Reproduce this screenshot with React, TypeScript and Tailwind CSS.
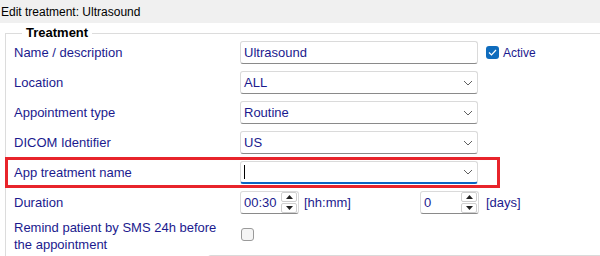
import React from "react";

const NAVY = "text-[#1b1a8e]";

function Chevron() {
  return (
    <svg width="10" height="6" viewBox="0 0 10 6" className="shrink-0">
      <path d="M1 1 L5 5 L9 1" fill="none" stroke="#606060" strokeWidth="1" />
    </svg>
  );
}

function Input({ value, select, focused }: { value?: string; select?: boolean; focused?: boolean }) {
  return (
    <div
      className={`w-[238px] h-[23px] bg-white rounded-[3px] border border-[#dadada] flex items-center pl-[3px] pr-[4px] ${
        focused ? "border-b-2 border-b-[#0a64c2]" : "border-b-[#8a8a8a]"
      }`}
    >
      <span className={`flex-1 ${NAVY} text-[13px] leading-none`}>
        {focused ? <span className="inline-block w-[1px] h-[14px] bg-black align-middle" /> : value}
      </span>
      {select && <Chevron />}
    </div>
  );
}

function Spinner() {
  return (
    <div className="flex flex-col w-[16px] h-[21px] gap-[1px] mr-[1px]">
      <div className="flex-1 border border-[#cfcfcf] rounded-[2px] flex items-center justify-center bg-white">
        <svg width="7" height="4" viewBox="0 0 7 4"><path d="M0 4 L3.5 0 L7 4 Z" fill="#222" /></svg>
      </div>
      <div className="flex-1 border border-[#cfcfcf] rounded-[2px] flex items-center justify-center bg-white">
        <svg width="7" height="4" viewBox="0 0 7 4"><path d="M0 0 L3.5 4 L7 0 Z" fill="#222" /></svg>
      </div>
    </div>
  );
}

function SpinInput({ value }: { value: string }) {
  return (
    <div className="w-[59px] h-[23px] bg-white rounded-[3px] border border-[#dadada] border-b-[#8a8a8a] flex items-center pl-[3px]">
      <span className={`flex-1 ${NAVY} text-[13px] leading-none`}>{value}</span>
      <Spinner />
    </div>
  );
}

function Row({ label, children }: { label: React.ReactNode; children: React.ReactNode }) {
  return (
    <div className="flex h-[30px]">
      <div className={`w-[226px] h-[23px] flex items-center ${NAVY} text-[13px]`}>{label}</div>
      <div className="flex items-start">{children}</div>
    </div>
  );
}

export default function App() {
  return (
    <div
      className="w-[600px] h-[256px] overflow-hidden bg-white text-black"
      style={{ fontFamily: '"Liberation Sans", Arial, sans-serif' }}
    >
      <div className="h-[23px] bg-[#f0f0f0] flex items-center pl-[1px] text-[12px] text-black">
        Edit treatment: Ultrasound
      </div>
      <fieldset className="ml-[5px] mt-[2px] w-[700px] border-l border-t border-[#dcdcdc] pl-[8px]">
        <legend className="ml-[8px] px-[4px] text-[13px] font-bold leading-[16px] text-black">Treatment</legend>
        <div className="flex flex-col">
          <Row label="Name / description">
            <Input value="Ultrasound" />
            <div className="ml-[8px] h-[23px] flex items-center gap-[4px]">
              <div className="w-[13px] h-[13px] rounded-[3px] bg-[#0f6cbd] flex items-center justify-center">
                <svg width="9" height="7" viewBox="0 0 9 7">
                  <path d="M1 3.5 L3.5 6 L8 1" fill="none" stroke="white" strokeWidth="1.2" />
                </svg>
              </div>
              <span className={`${NAVY} text-[12px]`}>Active</span>
            </div>
          </Row>
          <Row label="Location">
            <Input value="ALL" select />
          </Row>
          <Row label="Appointment type">
            <Input value="Routine" select />
          </Row>
          <Row label="DICOM Identifier">
            <Input value="US" select />
          </Row>
          <div className="relative">
            <div className="absolute left-[-9px] top-[-4px] w-[495px] h-[31px] border-[3px] border-[#e8242b] pointer-events-none" />
            <Row label="App treatment name">
              <Input select focused />
            </Row>
          </div>
          <Row label="Duration">
            <SpinInput value="00:30" />
            <div className={`w-[121px] pl-[5px] h-[23px] flex items-center ${NAVY} text-[13px]`}>[hh:mm]</div>
            <SpinInput value="0" />
            <div className={`pl-[7px] h-[23px] flex items-center ${NAVY} text-[13px]`}>[days]</div>
          </Row>
          <div className="flex h-[34px]">
            <div className={`w-[226px] ${NAVY} text-[13px] leading-[17px] -mt-[2px]`}>
              Remind patient by SMS 24h before
              <br />
              the appointment
            </div>
            <div className="pl-[1px] pt-[7px]">
              <div className="w-[13px] h-[13px] rounded-[3px] border border-[#9a9a9a] bg-[#f5f5f5]" />
            </div>
          </div>
          <div className="ml-[194px] h-[10px] border-t border-l border-[#dadada] rounded-tl-[3px]" />
        </div>
      </fieldset>
    </div>
  );
}
